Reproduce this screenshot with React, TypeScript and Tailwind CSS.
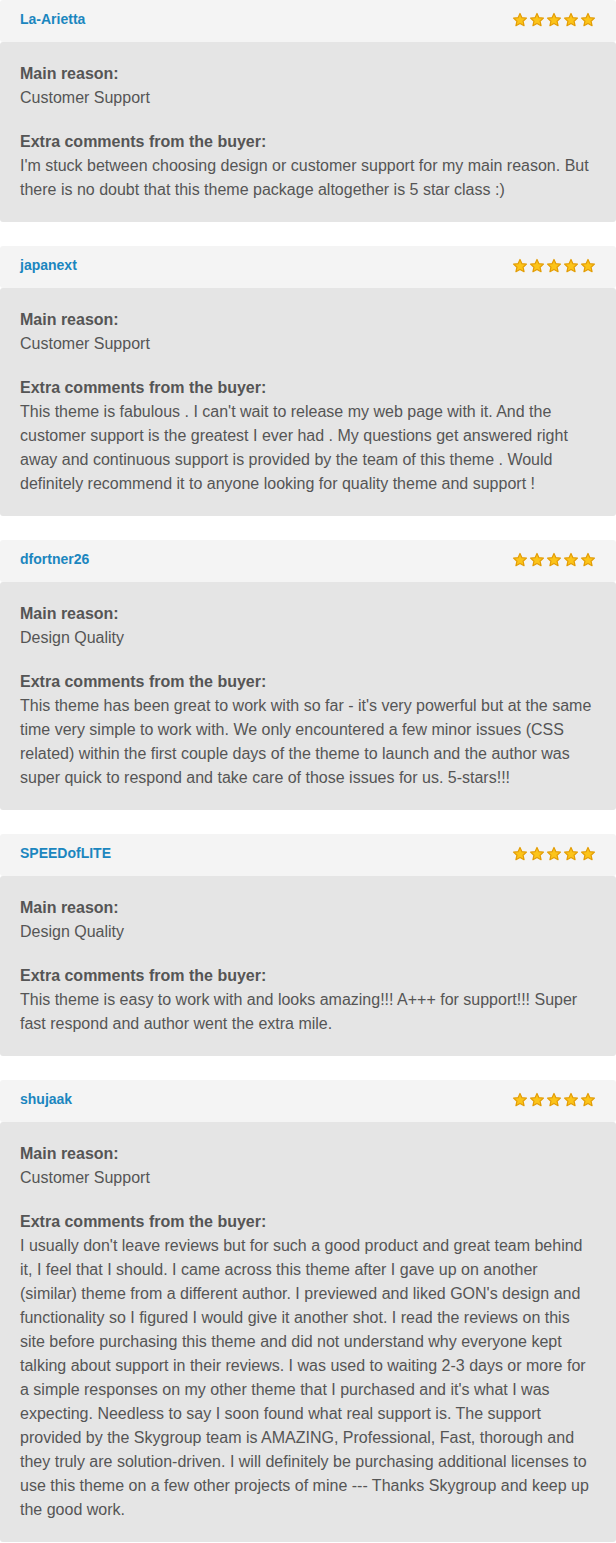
import React from "react";

interface Review {
  name: string;
  reason: string;
  comment: string;
}

const reviews: Review[] = [
  {
    name: "La-Arietta",
    reason: "Customer Support",
    comment:
      "I'm stuck between choosing design or customer support for my main reason. But there is no doubt that this theme package altogether is 5 star class :)",
  },
  {
    name: "japanext",
    reason: "Customer Support",
    comment:
      "This theme is fabulous . I can't wait to release my web page with it. And the customer support is the greatest I ever had . My questions get answered right away and continuous support is provided by the team of this theme . Would definitely recommend it to anyone looking for quality theme and support !",
  },
  {
    name: "dfortner26",
    reason: "Design Quality",
    comment:
      "This theme has been great to work with so far - it's very powerful but at the same time very simple to work with. We only encountered a few minor issues (CSS related) within the first couple days of the theme to launch and the author was super quick to respond and take care of those issues for us. 5-stars!!!",
  },
  {
    name: "SPEEDofLITE",
    reason: "Design Quality",
    comment:
      "This theme is easy to work with and looks amazing!!! A+++ for support!!! Super fast respond and author went the extra mile.",
  },
  {
    name: "shujaak",
    reason: "Customer Support",
    comment:
      "I usually don't leave reviews but for such a good product and great team behind it, I feel that I should. I came across this theme after I gave up on another (similar) theme from a different author. I previewed and liked GON's design and functionality so I figured I would give it another shot. I read the reviews on this site before purchasing this theme and did not understand why everyone kept talking about support in their reviews. I was used to waiting 2-3 days or more for a simple responses on my other theme that I purchased and it's what I was expecting. Needless to say I soon found what real support is. The support provided by the Skygroup team is AMAZING, Professional, Fast, thorough and they truly are solution-driven. I will definitely be purchasing additional licenses to use this theme on a few other projects of mine --- Thanks Skygroup and keep up the good work.",
  },
];

const Star = () => (
  <svg width="16" height="16" viewBox="0 0 24 24" className="block">
    <path
      d="M12 2.2l2.9 6.3 6.8.7-5.1 4.6 1.5 6.8L12 17.1l-6.1 3.5 1.5-6.8-5.1-4.6 6.8-.7z"
      fill="#fcc419"
      stroke="#e39d06"
      strokeWidth="1.8"
      strokeLinejoin="round"
    />
  </svg>
);

const ReviewCard = ({ data }: { data: Review }) => {
  return (
    <div className="mb-[24px] last:mb-0">
      <div className="h-[42px] bg-[#f4f4f4] rounded-[3px] flex items-center justify-between pl-5 pr-[20px] pb-[3px]">
        <span className="text-[14px] font-bold text-[#1b86bf]">{data.name}</span>
        <div className="flex items-center gap-[1px]">
          {[0, 1, 2, 3, 4].map((i) => (
            <Star key={i} />
          ))}
        </div>
      </div>
      <div className="bg-[#e5e5e5] rounded-[3px] px-5 py-5 text-[16px] leading-[24px] text-[#555555]">
        <p className="font-bold">Main reason:</p>
        <p>{data.reason}</p>
        <p className="font-bold mt-5">Extra comments from the buyer:</p>
        <p>{data.comment}</p>
      </div>
    </div>
  );
};

export default function App() {
  return (
    <div className="w-[616px] bg-white font-['Liberation_Sans',Arial,sans-serif]">
      {reviews.map((r) => (
        <ReviewCard key={r.name} data={r} />
      ))}
    </div>
  );
}
